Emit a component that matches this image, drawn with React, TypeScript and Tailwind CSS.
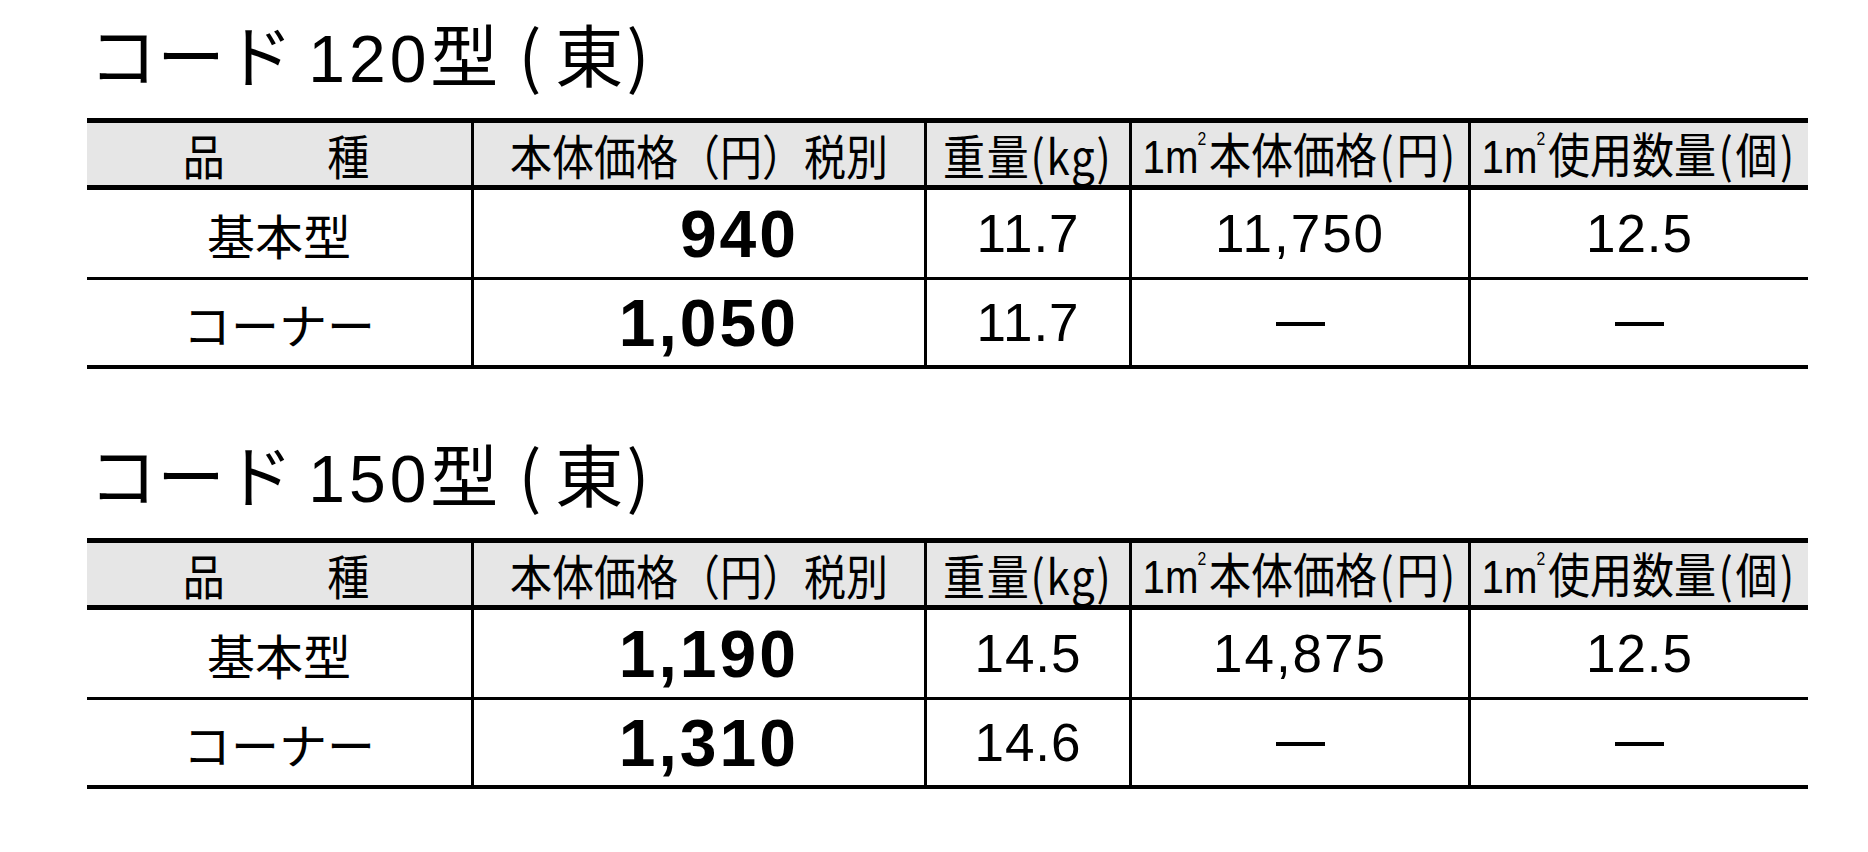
const cjk = "font-['Noto_Sans_CJK_JP',sans-serif]"
const num = "font-['Liberation_Sans',Arial,sans-serif]"

type Row = { name: string; price: string; weight: string; perM2: string; count: string }

const tables: { size: string; rows: Row[] }[] = [
  {
    size: '120',
    rows: [
      { name: '基本型', price: '940', weight: '11.7', perM2: '11,750', count: '12.5' },
      { name: 'コーナー', price: '1,050', weight: '11.7', perM2: '—', count: '—' },
    ],
  },
  {
    size: '150',
    rows: [
      { name: '基本型', price: '1,190', weight: '14.5', perM2: '14,875', count: '12.5' },
      { name: 'コーナー', price: '1,310', weight: '14.6', perM2: '—', count: '—' },
    ],
  },
]

const cols = 'grid grid-cols-[384px_453px_205px_339px_340px]'

function Sq() {
  return (
    <span className={`${num} text-[46px]`}>
      1m<span className="inline-block text-[18px] align-top -ml-[1px] mt-[2px] mr-[3px]">2</span>
    </span>
  )
}

function Dash() {
  return <span className="block w-[49px] h-[4px] mt-[3px] bg-black" />
}

// header label, drawn a little narrower like the original's condensed face
function Head({ children, className = '' }: { children: React.ReactNode; className?: string }) {
  return <span className={`inline-block whitespace-nowrap scale-x-[0.875] ${className}`}>{children}</span>
}

function PriceTable({ size, rows }: { size: string; rows: Row[] }) {
  return (
    <section>
      <h2 className={`${cjk} text-[68px] leading-none h-[68px] pl-[2px] mb-[31px] text-black whitespace-nowrap`}>
        コード <span className={`${num} text-[66px] tracking-[4px]`}>{size}</span>型
        <span className="ml-[20px]">(</span>
        <span className="ml-[14px] mr-[3px]">東</span>
        <span>)</span>
      </h2>

      <div className="w-[1721px] text-black">
        {/* header */}
        <div className={`${cols} ${cjk} bg-[#e6e6e6] border-t-[5px] border-b-[5px] border-black h-[72px] text-[48px] leading-none`}>
          <div className="flex items-center justify-center"><Head className="tracking-[7px]">品　　種</Head></div>
          <div className="flex items-center justify-center border-l-[3px] border-black"><Head>本体価格（円）税別</Head></div>
          <div className="flex items-center justify-center border-l-[3px] border-black"><Head className="tracking-[2px]">重量(kg)</Head></div>
          <div className="flex items-center justify-center border-l-[3px] border-black"><Head><Sq />本体価格<span className="mx-[3px]">(</span>円<span className="mx-[3px]">)</span></Head></div>
          <div className="flex items-center justify-center border-l-[3px] border-black"><Head><Sq />使用数量<span className="mx-[3px]">(</span>個<span className="mx-[3px]">)</span></Head></div>
        </div>

        {rows.map((r, i) => (
          <div
            key={r.name}
            className={`${cols} border-b-black ${i === 0 ? 'h-[90px] border-b-[3px]' : 'h-[89px] border-b-[4px]'}`}
          >
            <div className={`${cjk} flex items-center justify-center text-[48px] leading-none`}>{r.name}</div>
            <div className={`${num} flex items-center justify-end pr-[125px] border-l-[3px] border-black text-[66px] font-bold tracking-[3px] leading-none`}>{r.price}</div>
            <div className={`${num} flex items-center justify-center border-l-[3px] border-black text-[53px] tracking-[1px] leading-none`}>{r.weight}</div>
            <div className={`${num} flex items-center justify-center border-l-[3px] border-black text-[53px] tracking-[2px] leading-none`}>
              {r.perM2 === '—' ? <Dash /> : r.perM2}
            </div>
            <div className={`${num} flex items-center justify-center border-l-[3px] border-black text-[53px] tracking-[1px] leading-none`}>
              {r.count === '—' ? <Dash /> : r.count}
            </div>
          </div>
        ))}
      </div>
    </section>
  )
}

export default function App() {
  return (
    <div className="w-[1868px] h-[852px] bg-white pl-[87px] pt-[19px] flex flex-col gap-[70px] overflow-hidden">
      {tables.map(t => (
        <PriceTable key={t.size} size={t.size} rows={t.rows} />
      ))}
    </div>
  )
}
